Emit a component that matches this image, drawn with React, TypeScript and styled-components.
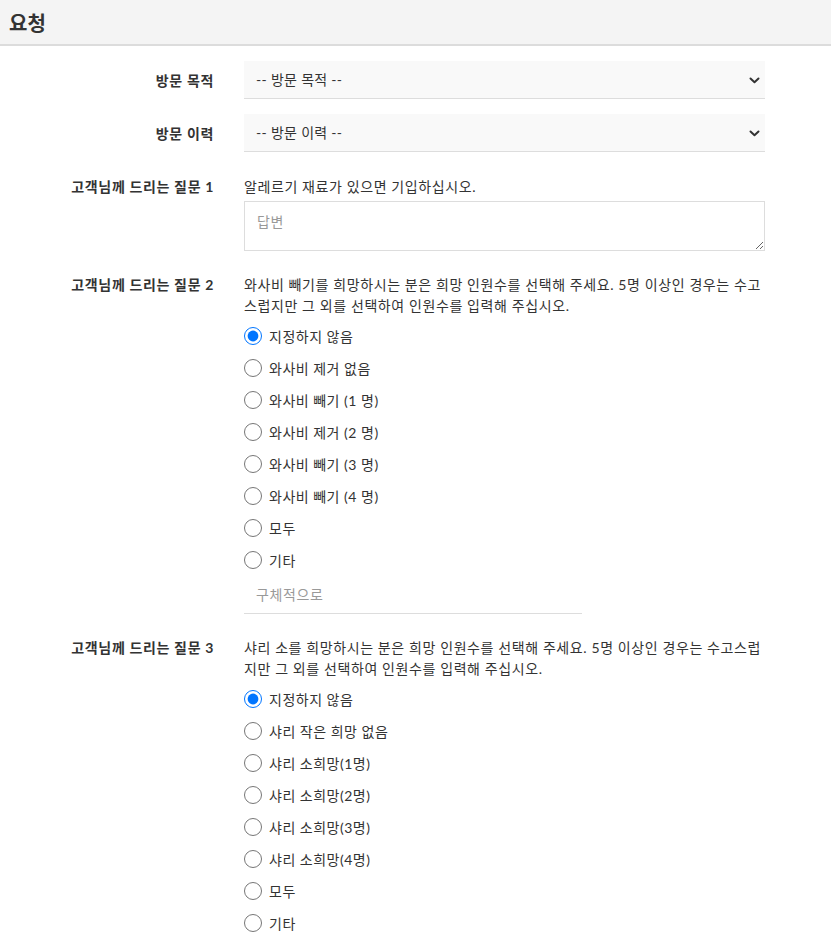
import React from 'react';
import styled, { createGlobalStyle } from 'styled-components';

const GlobalStyle = createGlobalStyle`
  body {
    margin: 0;
    background: #fff;
    font-family: 'Lato', 'Noto Sans CJK KR', sans-serif;
    color: #333;
  }
`;

const Header = styled.div`
  height: 44px;
  display: flex;
  align-items: center;
  padding-left: 9px;
  background: #f4f4f4;
  border-bottom: 2px solid #dcdcdc;
  h1 {
    margin: 0;
    font-size: 20px;
    font-weight: 700;
    color: #333;
  }
`;

const Form = styled.form`
  padding-top: 15px;
  padding-bottom: 20px;
`;

const Row = styled.div<{ $top: number }>`
  display: grid;
  grid-template-columns: 214px 521px;
  column-gap: 30px;
  margin-top: ${p => p.$top}px;
`;

const Label = styled.div<{ $center?: boolean }>`
  text-align: right;
  font-size: 14px;
  line-height: 21px;
  font-weight: 700;
  letter-spacing: 0.65px;
  color: #333;
  align-self: ${p => (p.$center ? 'center' : 'start')};
`;

const Field = styled.div`
  display: flex;
  flex-direction: column;
`;

const SelectWrap = styled.div`
  position: relative;
  svg {
    position: absolute;
    right: 5px;
    top: 16px;
    pointer-events: none;
  }
`;

const Select = styled.select`
  appearance: none;
  width: 100%;
  height: 38px;
  padding: 0 12px;
  border: none;
  border-bottom: 1px solid #ddd;
  background: #f9f9f9;
  font-family: inherit;
  font-size: 14px;
  letter-spacing: 0.3px;
  color: #333;
  outline: none;
`;

const Description = styled.p`
  margin: 0 0 4px 0;
  font-size: 14px;
  line-height: 21px;
  letter-spacing: 0.6px;
  color: #333;
`;

const TextArea = styled.textarea`
  box-sizing: border-box;
  width: 100%;
  height: 50px;
  padding: 9px 12px;
  border: 1px solid #ddd;
  font-family: inherit;
  font-size: 14px;
  letter-spacing: 0.6px;
  color: #333;
  resize: vertical;
  outline: none;
  &::placeholder {
    color: #999;
  }
`;

const RadioRow = styled.label`
  display: flex;
  align-items: center;
  height: 32px;
  font-size: 14px;
  letter-spacing: 0.5px;
  color: #333;
  input {
    width: 18px;
    height: 18px;
    margin: 0 7px 0 0;
  }
`;

const OtherInput = styled.input`
  box-sizing: border-box;
  width: 338px;
  height: 38px;
  padding: 0 12px;
  border: none;
  border-bottom: 1px solid #ddd;
  font-family: inherit;
  font-size: 14px;
  letter-spacing: 0.6px;
  outline: none;
  &::placeholder {
    color: #999;
  }
`;

const Chevron = () => (
  <svg width="11" height="7" viewBox="0 0 11 7">
    <path d="M1.5 1.5 L5.5 5.2 L9.5 1.5" fill="none" stroke="#333" strokeWidth="2" strokeLinecap="round" strokeLinejoin="round" />
  </svg>
);

const wasabi = [
  '지정하지 않음',
  '와사비 제거 없음',
  '와사비 빼기 (1 명)',
  '와사비 제거 (2 명)',
  '와사비 빼기 (3 명)',
  '와사비 빼기 (4 명)',
  '모두',
  '기타',
];

const shari = [
  '지정하지 않음',
  '샤리 작은 희망 없음',
  '샤리 소희망(1명)',
  '샤리 소희망(2명)',
  '샤리 소희망(3명)',
  '샤리 소희망(4명)',
  '모두',
  '기타',
];

const RadioGroup: React.FC<{ name: string; options: string[] }> = ({ name, options }) => (
  <>
    {options.map((opt, i) => (
      <RadioRow key={opt}>
        <input type="radio" name={name} defaultChecked={i === 0} />
        {opt}
      </RadioRow>
    ))}
  </>
);

const App: React.FC = () => {
  return (
    <>
      <GlobalStyle />
      <Header>
        <h1>요청</h1>
      </Header>
      <Form>
        <Row $top={0}>
          <Label $center>방문 목적</Label>
          <SelectWrap>
            <Select defaultValue="">
              <option value="">-- 방문 목적 --</option>
            </Select>
            <Chevron />
          </SelectWrap>
        </Row>
        <Row $top={15}>
          <Label $center>방문 이력</Label>
          <SelectWrap>
            <Select defaultValue="">
              <option value="">-- 방문 이력 --</option>
            </Select>
            <Chevron />
          </SelectWrap>
        </Row>
        <Row $top={24}>
          <Label>고객님께 드리는 질문 1</Label>
          <Field>
            <Description>알레르기 재료가 있으면 기입하십시오.</Description>
            <TextArea placeholder="답변" />
          </Field>
        </Row>
        <Row $top={23}>
          <Label>고객님께 드리는 질문 2</Label>
          <Field>
            <Description>
              와사비 빼기를 희망하시는 분은 희망 인원수를 선택해 주세요. 5명 이상인 경우는 수고스럽지만 그 외를 선택하여 인원수를 입력해 주십시오.
            </Description>
            <RadioGroup name="wasabi" options={wasabi} />
            <OtherInput placeholder="구체적으로" />
          </Field>
        </Row>
        <Row $top={23}>
          <Label>고객님께 드리는 질문 3</Label>
          <Field>
            <Description>
              샤리 소를 희망하시는 분은 희망 인원수를 선택해 주세요. 5명 이상인 경우는 수고스럽지만 그 외를 선택하여 인원수를 입력해 주십시오.
            </Description>
            <RadioGroup name="shari" options={shari} />
          </Field>
        </Row>
      </Form>
    </>
  );
};

export default App;
